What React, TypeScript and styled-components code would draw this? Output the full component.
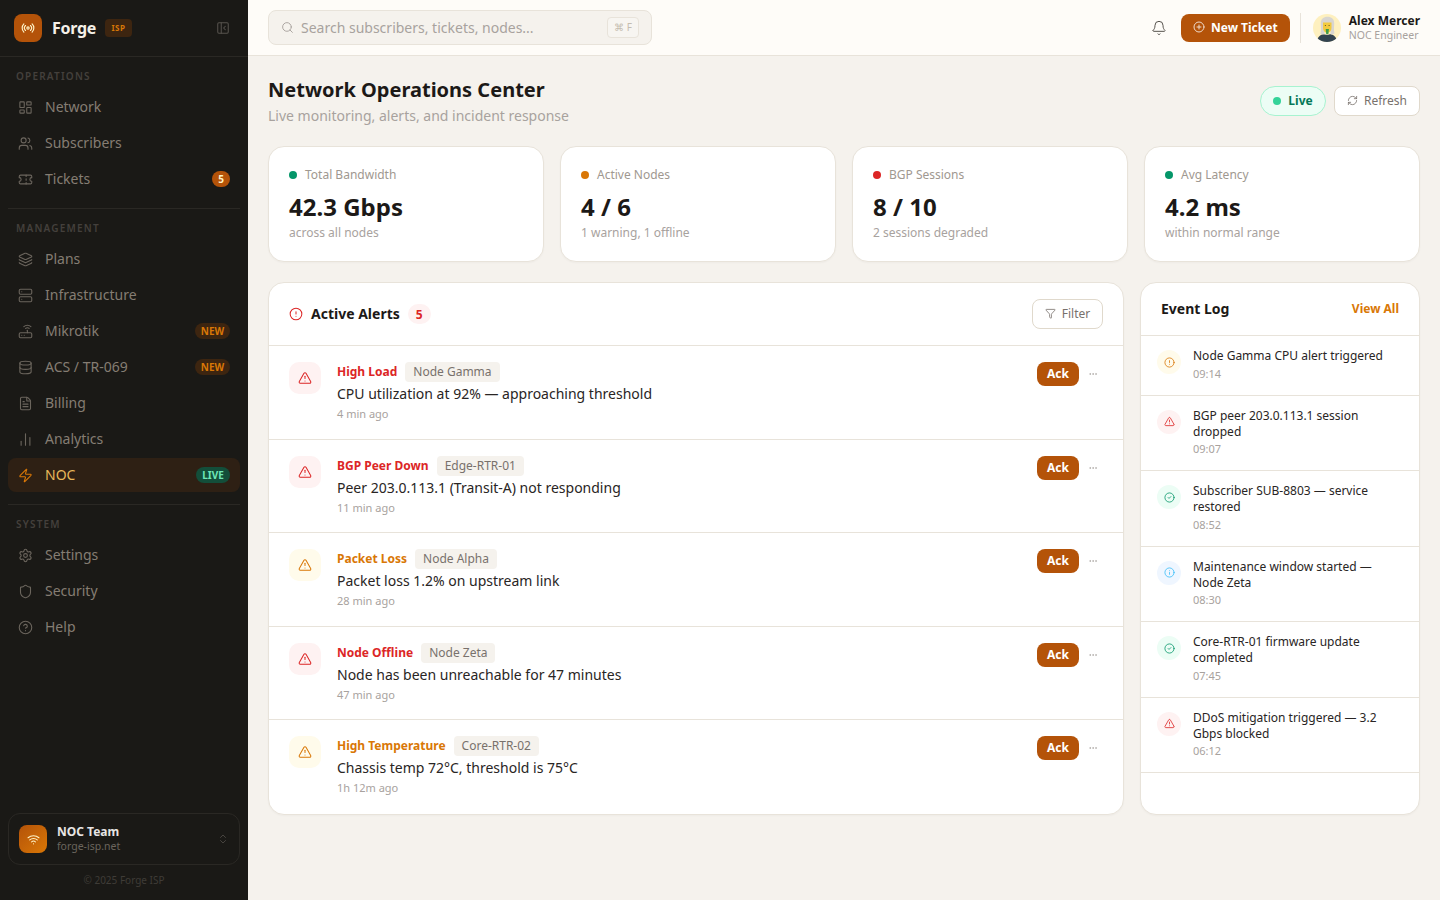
import React from "react";
import styled, { createGlobalStyle } from "styled-components";
import {
  Radio, PanelLeftClose, LayoutDashboard, Users, Ticket, Layers, Server, Router, Database,
  FileText, ChartNoAxesColumn, Zap, Settings, Shield, CircleHelp, Wifi, ChevronsUpDown,
  Search, Bell, CirclePlus, RefreshCw, Funnel, CircleAlert, TriangleAlert, Ellipsis, CircleCheck, Info,
} from "lucide-react";

const Global = createGlobalStyle`
  html, body { margin: 0; padding: 0; height: 100%; }
  body { font-family: "Noto Sans", sans-serif; background: #f5f2ed; color: #1c1917; overflow: hidden; }
  * { box-sizing: border-box; }
`;

const Shell = styled.div`display: flex; width: 1440px; height: 900px;`;

const Sidebar = styled.aside`
  width: 248px; flex: none; background: #1a1916; display: flex; flex-direction: column; height: 100%;
`;
const Brand = styled.div`
  height: 57px; flex: none; display: flex; align-items: center; padding: 0 18px 1px 14px;
  border-bottom: 1px solid #2a2824;
`;
const LogoMark = styled.div`
  width: 28px; height: 28px; border-radius: 8px; background: #b45309; color: #fef3c7;
  display: flex; align-items: center; justify-content: center; margin-right: 10px;
`;
const BrandName = styled.span`font-size: 16px; font-weight: 700; letter-spacing: -.3px; color: #f5f0e8; margin-right: 9px;`;
const IspTag = styled.span`
  font-size: 8px; font-weight: 700; letter-spacing: .5px; color: #d97706; background: #3d2510;
  border-radius: 4px; height: 18px; width: 27px; display: flex; align-items: center; justify-content: center;
`;
const Collapse = styled.span`margin-left: auto; color: #57534e; display: flex;`;
const Nav = styled.nav`flex: 1; padding: 12px 8px 0; display: flex; flex-direction: column;`;
const SectionLabel = styled.div`
  font-size: 10px; line-height: 14px; font-weight: 600; letter-spacing: 1.2px; color: #44403c;
  padding: 0 8px; margin-bottom: 7px;
`;
const NavGroup = styled.div`display: flex; flex-direction: column; gap: 2px;`;
const NavItem = styled.div<{ $active?: boolean }>`
  height: 34px; border-radius: 8px; padding: 0 10px; display: flex; align-items: center; gap: 12px;
  font-size: 14px; color: ${(p) => (p.$active ? "#e8b85a" : "#857d73")};
  background: ${(p) => (p.$active ? "#2e2014" : "transparent")};
  svg { color: ${(p) => (p.$active ? "#d97706" : "#6b655d")}; flex: none; }
`;
const NavLabel = styled.span`line-height: 18px; margin-top: -1px;`;
const NavDivider = styled.div`height: 1px; background: #2a2824; margin: 12px 0;`;
const CountBadge = styled.span`
  margin-left: auto; width: 18px; height: 16px; border-radius: 8px; background: #b45309; color: #fef3c7;
  font-size: 10px; font-weight: 700; display: flex; align-items: center; justify-content: center;
`;
const TextBadge = styled.span<{ $live?: boolean }>`
  margin-left: auto; width: ${(p) => (p.$live ? "34px" : "35px")}; height: 16px; border-radius: 8px;
  background: ${(p) => (p.$live ? "#134e3a" : "#3d2510")}; color: ${(p) => (p.$live ? "#6ee7b7" : "#d97706")};
  font-size: 10px; font-weight: 700; display: flex; align-items: center; justify-content: center;
`;
const TeamCard = styled.div`
  margin: 0 8px; height: 52px; border: 1px solid #2a2824; border-radius: 12px; display: flex;
  align-items: center; padding: 0 10px; gap: 10px;
`;
const TeamIcon = styled.div`
  width: 28px; height: 28px; border-radius: 8px; background: linear-gradient(135deg, #b45309, #d97706);
  color: #fef3c7; display: flex; align-items: center; justify-content: center; flex: none;
`;
const TeamText = styled.div`flex: 1; display: flex; flex-direction: column; padding-bottom: 2px;`;
const TeamName = styled.span`font-size: 12px; line-height: 15px; font-weight: 700; color: #e7e5e4;`;
const TeamSite = styled.span`font-size: 10.5px; line-height: 14px; color: #6b655d;`;
const TeamChevron = styled.span`color: #57534e; display: flex;`;
const Copyright = styled.div`
  height: 35px; padding-bottom: 5px; display: flex; align-items: center; justify-content: center;
  font-size: 10px; color: #3f3c37;
`;

const Content = styled.div`flex: 1; min-width: 0; display: flex; flex-direction: column;`;
const Topbar = styled.header`
  height: 56px; flex: none; background: #fefcf8; border-bottom: 1px solid #e8e3da; display: flex;
  align-items: center; padding: 0 20px;
`;
const SearchBox = styled.div`
  width: 384px; height: 35px; background: #f5f2ed; border: 1px solid #e8e3da; border-radius: 8px;
  display: flex; align-items: center; padding: 0 12px; gap: 7px; margin-top: -1px;
  svg { color: #a8a29e; }
`;
const SearchText = styled.span`flex: 1; font-size: 14px; color: #a8a29e;`;
const Kbd = styled.span`
  width: 32px; height: 21px; border: 1px solid #e8e3da; border-radius: 4px; background: #f7f5f1;
  font-size: 10px; color: #c4bcb0; display: flex; align-items: center; justify-content: center;
`;
const TopRight = styled.div`margin-left: auto; display: flex; align-items: center;`;
const BellBtn = styled.span`display: flex; color: #57534e; margin-right: 14px;`;
const PrimaryBtn = styled.button`
  height: 28px; width: 109px; border: 0; border-radius: 8px; background: #b45309; color: #fff;
  font-family: inherit; font-size: 12px; font-weight: 700; display: flex; align-items: center;
  justify-content: center; gap: 6px; padding: 0 0 1px;
  svg { opacity: .8; }
`;
const VDivider = styled.span`width: 1px; height: 30px; background: #e8e3da; margin: 0 12px 0 10px;`;
const UserName = styled.div`font-size: 12px; line-height: 15px; font-weight: 700; color: #1c1917;`;
const UserRole = styled.div`font-size: 10.5px; line-height: 14px; color: #a8a29e;`;
const UserBox = styled.div`display: flex; align-items: center; gap: 8px;`;

const Main = styled.main`flex: 1; padding: 20px; display: flex; flex-direction: column; min-height: 0;`;
const PageHead = styled.div`display: flex; align-items: center; justify-content: space-between; margin-bottom: 20px;`;
const H1 = styled.h1`margin: 0; font-size: 20px; line-height: 28px; font-weight: 700; color: #1c1917;`;
const Sub = styled.p`margin: 2px 0 0; font-size: 14px; line-height: 20px; color: #a8a29e;`;
const HeadActions = styled.div`display: flex; gap: 8px;`;
const LivePill = styled.div`
  height: 30px; width: 66px; border-radius: 15px; background: #ecfdf5; border: 1px solid #a7f3d0;
  display: flex; align-items: center; justify-content: center; gap: 7px; color: #047857;
  font-size: 12px; font-weight: 700; padding-bottom: 1px;
`;
const LiveDot = styled.span`width: 8px; height: 8px; border-radius: 50%; background: #34d399; margin-top: 1px;`;
const GhostBtn = styled.button<{ $w: number }>`
  height: 30px; width: ${(p) => p.$w}px; background: #fff; border: 1px solid #e0d9cc; border-radius: 8px;
  font-family: inherit; font-size: 12px; color: #78716c; display: flex; align-items: center;
  justify-content: center; gap: 6px; padding: 0 0 1px;
`;

const StatGrid = styled.div`display: grid; grid-template-columns: repeat(4, 1fr); gap: 16px; margin-bottom: 20px;`;
const Card = styled.section`
  background: #fff; border: 1px solid #e8e3da; border-radius: 16px; box-shadow: 0 1px 2px rgba(28,25,23,.03);
`;
const StatCard = styled(Card)`height: 116px; padding: 20px;`;
const StatLabel = styled.div`display: flex; align-items: center; gap: 8px; font-size: 12px; line-height: 16px; color: #a09890;`;
const Dot = styled.span<{ $c: string }>`width: 8px; height: 8px; border-radius: 50%; background: ${(p) => p.$c};`;
const StatValue = styled.div`font-size: 24px; line-height: 32px; font-weight: 700; color: #1c1917; margin-top: 8px;`;
const StatSub = styled.div`font-size: 12px; line-height: 16px; color: #a8a29e; margin-top: 2px;`;

const Lower = styled.div`display: grid; grid-template-columns: 1fr 280px; gap: 16px;`;
const AlertHead = styled.div`
  height: 63px; display: flex; align-items: center; padding: 0 20px; border-bottom: 1px solid #e8e3da;
  svg { color: #dc2626; }
`;
const CardTitle = styled.h2`margin: -2px 0 0; font-size: 14px; font-weight: 700; color: #1c1917;`;
const AlertTitle = styled(CardTitle)`margin-left: 8px;`;
const RedCount = styled.span`
  margin-left: 8px; width: 23px; height: 20px; border-radius: 10px; background: #fef2f2; color: #dc2626;
  font-size: 12px; font-weight: 700; display: flex; align-items: center; justify-content: center;
`;
const FilterWrap = styled.div`margin-left: auto; svg { color: #78716c; }`;
const AlertRow = styled.div<{ $last?: boolean }>`
  display: flex; gap: 16px; padding: 16px 20px;
  border-bottom: ${(p) => (p.$last ? "1px solid transparent" : "1px solid #e8e3da")};
`;
const AlertIcon = styled.div<{ $amber?: boolean }>`
  width: 32px; height: 32px; border-radius: 10px; flex: none; display: flex; align-items: center; justify-content: center;
  background: ${(p) => (p.$amber ? "#fffbeb" : "#fef2f2")}; color: ${(p) => (p.$amber ? "#d97706" : "#dc2626")};
`;
const AlertBody = styled.div`flex: 1; min-width: 0; padding-bottom: .5px;`;
const AlertTop = styled.div`display: flex; align-items: center; gap: 8px; height: 20px;`;
const AlertName = styled.span<{ $amber?: boolean }>`
  font-size: 12px; font-weight: 700; line-height: 16px; color: ${(p) => (p.$amber ? "#d97706" : "#dc2626")};
`;
const Tag = styled.span`
  font-size: 12px; line-height: 16px; padding: 2px 8px; background: #f5f2ed; color: #78716c; border-radius: 4px;
`;
const AlertMsg = styled.div`font-size: 14px; line-height: 19.6px; color: #292524; margin-top: 2px;`;
const AlertTime = styled.div`font-size: 11px; line-height: 15.9px; color: #a8a29e; margin-top: 2.5px;`;
const AlertActions = styled.div`display: flex; align-items: center; gap: 9px; align-self: flex-start; color: #a8a29e; padding-right: 5px;`;
const AckBtn = styled.button`
  width: 42px; height: 24px; border: 0; border-radius: 8px; background: #b45309; color: #fff;
  font-family: inherit; font-size: 12px; font-weight: 700; padding: 0 0 1px;
`;

const LogHead = styled.div`
  height: 53px; display: flex; align-items: center; justify-content: space-between; padding: 0 20px;
  border-bottom: 1px solid #e8e3da;
`;
const ViewAll = styled.span`font-size: 12px; font-weight: 700; color: #d97706; margin-top: -2px;`;
const LogRow = styled.div`display: flex; gap: 12px; padding: 12px 16px; border-bottom: 1px solid #e8e3da;`;
const LogIcon = styled.div<{ $bg: string; $c: string }>`
  width: 24px; height: 24px; border-radius: 50%; flex: none; margin-top: 2px; display: flex;
  align-items: center; justify-content: center; background: ${(p) => p.$bg}; color: ${(p) => p.$c};
`;
const LogText = styled.div`font-size: 12px; line-height: 15.75px; color: #292524;`;
const LogTime = styled.div`font-size: 11px; line-height: 18px; color: #a8a29e; margin-top: 1px;`;

const nav1 = [
  { icon: LayoutDashboard, label: "Network" },
  { icon: Users, label: "Subscribers" },
  { icon: Ticket, label: "Tickets", count: "5" },
];
const nav2 = [
  { icon: Layers, label: "Plans" },
  { icon: Server, label: "Infrastructure" },
  { icon: Router, label: "Mikrotik", tag: "NEW" },
  { icon: Database, label: "ACS / TR-069", tag: "NEW" },
  { icon: FileText, label: "Billing" },
  { icon: ChartNoAxesColumn, label: "Analytics" },
  { icon: Zap, label: "NOC", live: true, active: true },
];
const nav3 = [
  { icon: Settings, label: "Settings" },
  { icon: Shield, label: "Security" },
  { icon: CircleHelp, label: "Help" },
];

type NavEntry = { icon: React.ElementType; label: string; count?: string; tag?: string; live?: boolean; active?: boolean };
const NavList = ({ items }: { items: NavEntry[] }) => (
  <NavGroup>
    {items.map((n) => (
      <NavItem key={n.label} $active={n.active}>
        <n.icon size={15} strokeWidth={1.75} />
        <NavLabel>{n.label}</NavLabel>
        {n.count && <CountBadge>{n.count}</CountBadge>}
        {n.tag && <TextBadge>{n.tag}</TextBadge>}
        {n.live && <TextBadge $live>LIVE</TextBadge>}
      </NavItem>
    ))}
  </NavGroup>
);

const stats = [
  { c: "#059669", label: "Total Bandwidth", value: "42.3 Gbps", sub: "across all nodes" },
  { c: "#d97706", label: "Active Nodes", value: "4 / 6", sub: "1 warning, 1 offline" },
  { c: "#dc2626", label: "BGP Sessions", value: "8 / 10", sub: "2 sessions degraded" },
  { c: "#059669", label: "Avg Latency", value: "4.2 ms", sub: "within normal range" },
];
const alerts = [
  { name: "High Load", node: "Node Gamma", msg: "CPU utilization at 92% — approaching threshold", time: "4 min ago" },
  { name: "BGP Peer Down", node: "Edge-RTR-01", msg: "Peer 203.0.113.1 (Transit-A) not responding", time: "11 min ago" },
  { name: "Packet Loss", node: "Node Alpha", msg: "Packet loss 1.2% on upstream link", time: "28 min ago", amber: true },
  { name: "Node Offline", node: "Node Zeta", msg: "Node has been unreachable for 47 minutes", time: "47 min ago" },
  { name: "High Temperature", node: "Core-RTR-02", msg: "Chassis temp 72°C, threshold is 75°C", time: "1h 12m ago", amber: true },
];
const logKinds = {
  warn: { icon: CircleAlert, bg: "#fffbeb", c: "#d97706" },
  err: { icon: TriangleAlert, bg: "#fef2f2", c: "#dc2626" },
  ok: { icon: CircleCheck, bg: "#ecfdf5", c: "#059669" },
  info: { icon: Info, bg: "#eff6ff", c: "#38bdf8" },
};
const logs: { kind: keyof typeof logKinds; text: string; time: string }[] = [
  { kind: "warn", text: "Node Gamma CPU alert triggered", time: "09:14" },
  { kind: "err", text: "BGP peer 203.0.113.1 session dropped", time: "09:07" },
  { kind: "ok", text: "Subscriber SUB-8803 — service restored", time: "08:52" },
  { kind: "info", text: "Maintenance window started — Node Zeta", time: "08:30" },
  { kind: "ok", text: "Core-RTR-01 firmware update completed", time: "07:45" },
  { kind: "err", text: "DDoS mitigation triggered — 3.2 Gbps blocked", time: "06:12" },
];

const Avatar = () => (
  <svg width="28" height="28" viewBox="0 0 28 28" style={{ flex: "none" }}>
    <defs><clipPath id="av"><circle cx="14" cy="14" r="14" /></clipPath></defs>
    <g clipPath="url(#av)">
      <rect width="28" height="28" fill="#fef0bf" />
      <path d="M4 28c0-4.500 3-7 6.500-8 1 1 6 1 7 0 3.500 1 6.500 3.500 6.500 8z" fill="#33434f" />
      <path d="M7.500 19.500C8.500 15 7.800 12 7.800 9.500 7.800 5 10.500 2.800 14.500 2.800s6.700 2.200 6.700 6.700c0 2.500-.7 5.500.3 10-1.500 1-3 1.300-4 1V11h-6v9.500c-1 .3-3-.1-4.500-1z" fill="#d8d5d0" />
      <path d="M10 8.500h8.500V14c0 2.800-1.900 4.800-4.200 4.800S10 16.800 10 14z" fill="#f2ca3e" />
      <circle cx="12.400" cy="11.500" r=".6" fill="#5c4a1e" />
      <circle cx="16.100" cy="11.500" r=".6" fill="#5c4a1e" />
      <path d="M12.700 15h3.200l-.5 5h-2.200z" fill="#3f9b4a" />
    </g>
  </svg>
);

export default function App() {
  return (
    <Shell>
      <Global />
      <Sidebar>
        <Brand>
          <LogoMark><Radio size={14} strokeWidth={2} /></LogoMark>
          <BrandName>Forge</BrandName>
          <IspTag>ISP</IspTag>
          <Collapse><PanelLeftClose size={14} strokeWidth={1.75} /></Collapse>
        </Brand>
        <Nav>
          <SectionLabel>OPERATIONS</SectionLabel>
          <NavList items={nav1} />
          <NavDivider />
          <SectionLabel>MANAGEMENT</SectionLabel>
          <NavList items={nav2} />
          <NavDivider />
          <SectionLabel>SYSTEM</SectionLabel>
          <NavList items={nav3} />
        </Nav>
        <TeamCard>
          <TeamIcon><Wifi size={13} strokeWidth={2} /></TeamIcon>
          <TeamText>
            <TeamName>NOC Team</TeamName>
            <TeamSite>forge-isp.net</TeamSite>
          </TeamText>
          <TeamChevron><ChevronsUpDown size={12} strokeWidth={1.5} /></TeamChevron>
        </TeamCard>
        <Copyright>© 2025 Forge ISP</Copyright>
      </Sidebar>
      <Content>
        <Topbar>
          <SearchBox>
            <Search size={13} strokeWidth={1.75} />
            <SearchText>Search subscribers, tickets, nodes...</SearchText>
            <Kbd>⌘ F</Kbd>
          </SearchBox>
          <TopRight>
            <BellBtn><Bell size={16} strokeWidth={1.5} /></BellBtn>
            <PrimaryBtn><CirclePlus size={12} strokeWidth={2} />New Ticket</PrimaryBtn>
            <VDivider />
            <UserBox>
              <Avatar />
              <div>
                <UserName>Alex Mercer</UserName>
                <UserRole>NOC Engineer</UserRole>
              </div>
            </UserBox>
          </TopRight>
        </Topbar>
        <Main>
          <PageHead>
            <div>
              <H1>Network Operations Center</H1>
              <Sub>Live monitoring, alerts, and incident response</Sub>
            </div>
            <HeadActions>
              <LivePill><LiveDot />Live</LivePill>
              <GhostBtn $w={86}><RefreshCw size={11} strokeWidth={1.75} />Refresh</GhostBtn>
            </HeadActions>
          </PageHead>
          <StatGrid>
            {stats.map((s) => (
              <StatCard key={s.label}>
                <StatLabel><Dot $c={s.c} />{s.label}</StatLabel>
                <StatValue>{s.value}</StatValue>
                <StatSub>{s.sub}</StatSub>
              </StatCard>
            ))}
          </StatGrid>
          <Lower>
            <Card>
              <AlertHead>
                <CircleAlert size={14} strokeWidth={1.75} />
                <AlertTitle>Active Alerts</AlertTitle>
                <RedCount>5</RedCount>
                <FilterWrap>
                  <GhostBtn $w={71}><Funnel size={11} strokeWidth={1.75} />Filter</GhostBtn>
                </FilterWrap>
              </AlertHead>
              {alerts.map((a, i) => (
                <AlertRow key={a.name} $last={i === alerts.length - 1}>
                  <AlertIcon $amber={a.amber}><TriangleAlert size={14} strokeWidth={1.75} /></AlertIcon>
                  <AlertBody>
                    <AlertTop>
                      <AlertName $amber={a.amber}>{a.name}</AlertName>
                      <Tag>{a.node}</Tag>
                    </AlertTop>
                    <AlertMsg>{a.msg}</AlertMsg>
                    <AlertTime>{a.time}</AlertTime>
                  </AlertBody>
                  <AlertActions>
                    <AckBtn>Ack</AckBtn>
                    <Ellipsis size={10} strokeWidth={1.75} />
                  </AlertActions>
                </AlertRow>
              ))}
            </Card>
            <Card>
              <LogHead>
                <CardTitle>Event Log</CardTitle>
                <ViewAll>View All</ViewAll>
              </LogHead>
              {logs.map((l) => {
                const k = logKinds[l.kind];
                return (
                  <LogRow key={l.text}>
                    <LogIcon $bg={k.bg} $c={k.c}><k.icon size={11} strokeWidth={1.75} /></LogIcon>
                    <div>
                      <LogText>{l.text}</LogText>
                      <LogTime>{l.time}</LogTime>
                    </div>
                  </LogRow>
                );
              })}
            </Card>
          </Lower>
        </Main>
      </Content>
    </Shell>
  );
}
